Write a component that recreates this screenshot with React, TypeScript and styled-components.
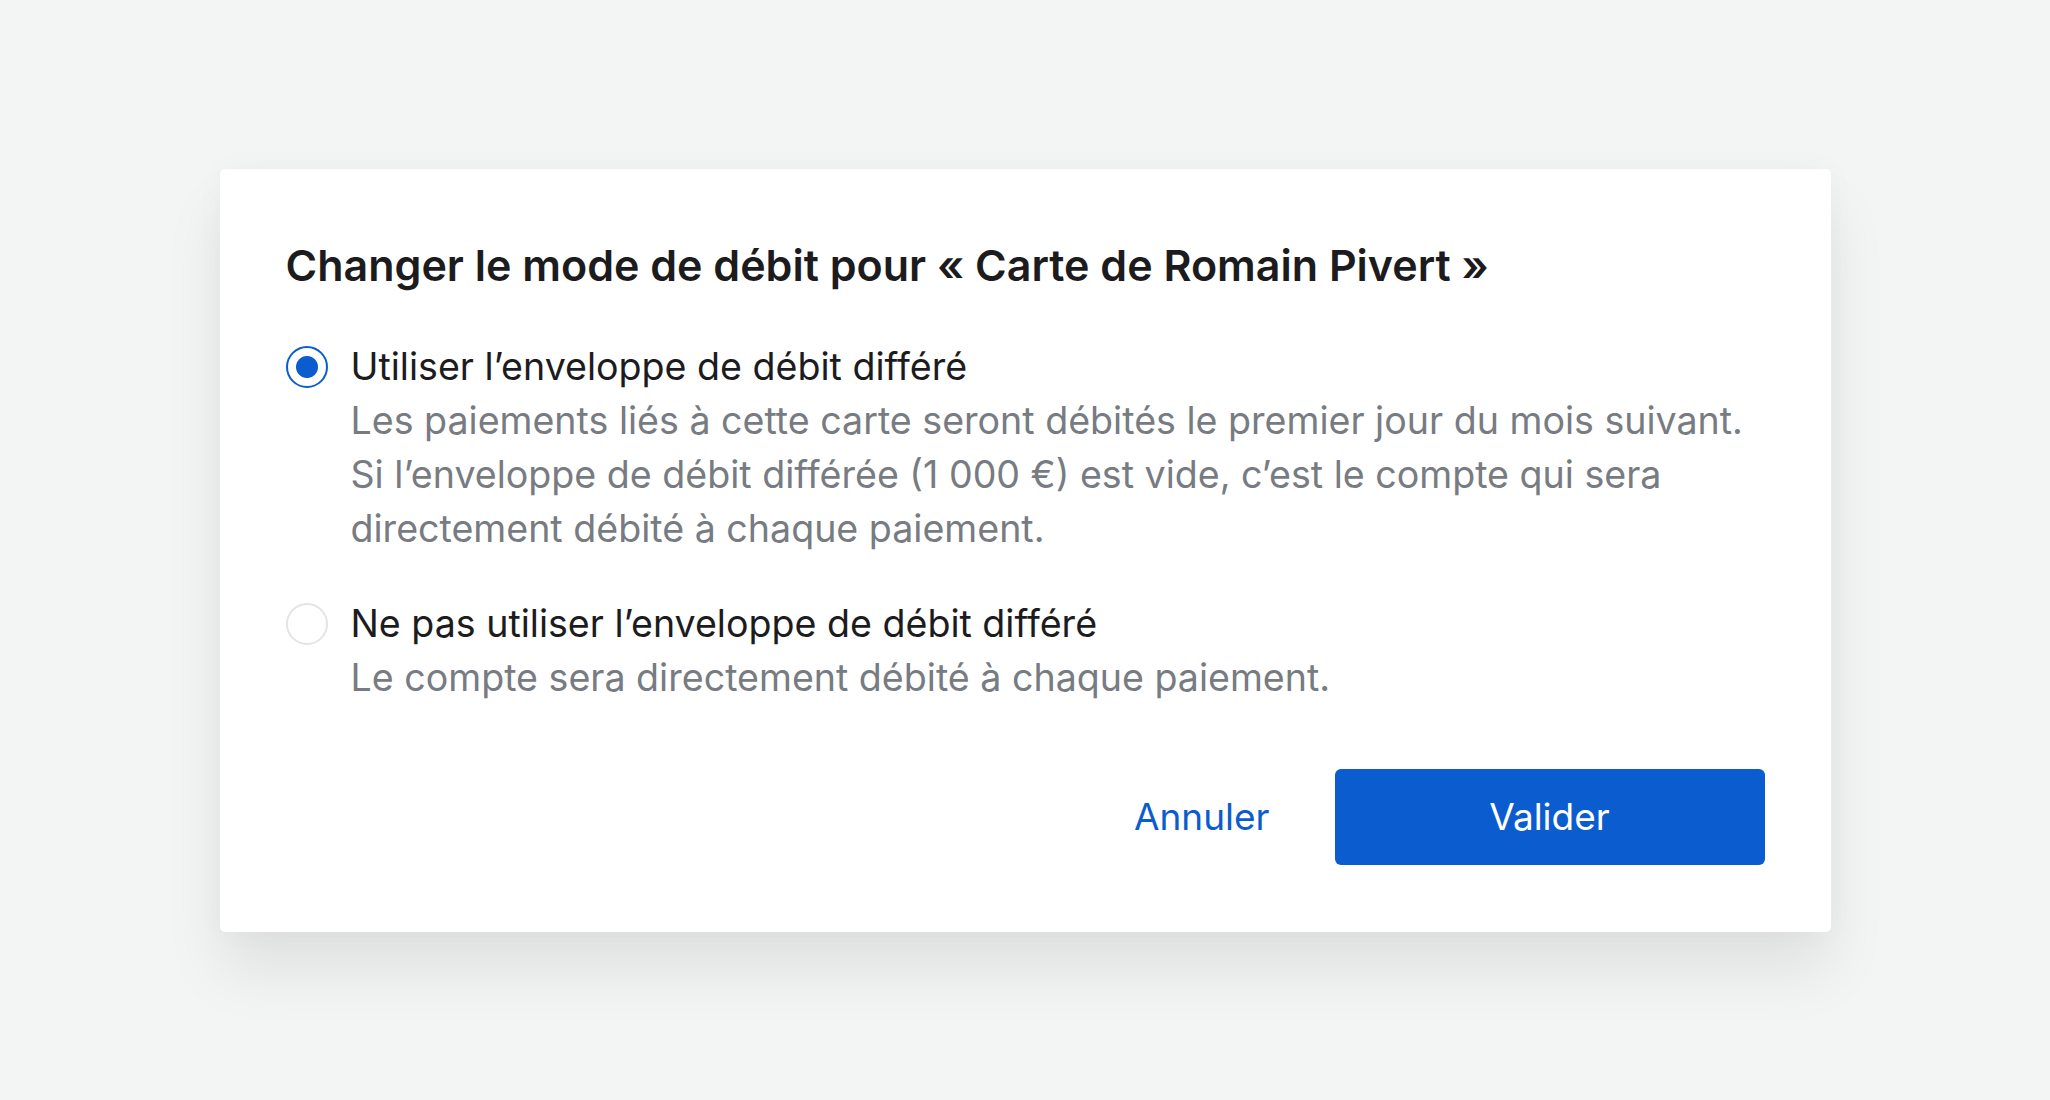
import { useState } from "react";
import styled, { createGlobalStyle } from "styled-components";

const colors = {
  page: "#f3f4f4",
  card: "#ffffff",
  text: "#1c1c1e",
  muted: "#777b82",
  primary: "#0b5ccf",
  radioOff: "#e3e4e5",
};

const GlobalStyle = createGlobalStyle`
  html, body {
    margin: 0;
    padding: 0;
    background: ${colors.page};
  }
  body {
    font-family: Inter, "Noto Sans", "Liberation Sans", sans-serif;
    -webkit-font-smoothing: antialiased;
  }
`;

const Page = styled.div`
  min-height: 100vh;
  display: flex;
  align-items: center;
  justify-content: center;
`;

const Dialog = styled.div`
  width: 1611px;
  box-sizing: border-box;
  padding: 68px 66px 67px 66px;
  background: ${colors.card};
  border-radius: 5px;
  box-shadow: 0 40px 60px rgba(0, 0, 0, 0.08), 0 0 30px rgba(0, 0, 0, 0.03);
  display: flex;
  flex-direction: column;
`;

const Title = styled.h1`
  margin: 0 0 47px 0;
  font-size: 43px;
  line-height: 56px;
  font-weight: 600;
  color: ${colors.text};
`;

const Options = styled.div`
  display: flex;
  flex-direction: column;
  gap: 41px;
`;

const Option = styled.label`
  display: flex;
  align-items: flex-start;
  gap: 23px;
  cursor: pointer;
`;

const RadioInput = styled.input`
  appearance: none;
  flex: none;
  margin: 6px 0 0 0;
  width: 42px;
  height: 42px;
  border-radius: 50%;
  box-sizing: border-box;
  border: 2.5px solid ${(p) => (p.checked ? colors.primary : colors.radioOff)};
  background: ${(p) =>
    p.checked
      ? `radial-gradient(circle, ${colors.primary} 0 10.5px, transparent 11.5px)`
      : "transparent"};
  cursor: pointer;
  outline: none;
`;

const OptionText = styled.div`
  display: flex;
  flex-direction: column;
  font-size: 37.6px;
  line-height: 54px;
`;

const Label = styled.span`
  color: ${colors.text};
`;

const Description = styled.span`
  color: ${colors.muted};
  max-width: 1420px;
`;

const Actions = styled.div`
  margin-top: 64px;
  display: flex;
  justify-content: flex-end;
  align-items: center;
  gap: 65px;
`;

const Button = styled.button<{ $variant?: "primary" | "ghost" }>`
  font-family: inherit;
  font-size: 37px;
  height: 96px;
  padding: 0;
  border-radius: 6px;
  border: none;
  cursor: pointer;
  width: ${(p) => (p.$variant === "primary" ? "430px" : "auto")};
  background: ${(p) => (p.$variant === "primary" ? colors.primary : "transparent")};
  color: ${(p) => (p.$variant === "primary" ? "#ffffff" : colors.primary)};
`;

const options = [
  {
    id: "deferred",
    label: "Utiliser l’enveloppe de débit différé",
    description: [
      "Les paiements liés à cette carte seront débités le premier jour du mois suivant.",
      "Si l’enveloppe de débit différée (1 000 €) est vide, c’est le compte qui sera directement débité à chaque paiement.",
    ],
  },
  {
    id: "direct",
    label: "Ne pas utiliser l’enveloppe de débit différé",
    description: ["Le compte sera directement débité à chaque paiement."],
  },
];

export default function App() {
  const [mode, setMode] = useState("deferred");

  return (
    <>
      <GlobalStyle />
      <Page>
        <Dialog role="dialog">
          <Title>Changer le mode de débit pour « Carte de Romain Pivert »</Title>
          <Options>
            {options.map((o) => (
              <Option key={o.id}>
                <RadioInput
                  type="radio"
                  name="mode"
                  checked={mode === o.id}
                  onChange={() => setMode(o.id)}
                />
                <OptionText>
                  <Label>{o.label}</Label>
                  {o.description.map((line) => (
                    <Description key={line}>{line}</Description>
                  ))}
                </OptionText>
              </Option>
            ))}
          </Options>
          <Actions>
            <Button $variant="ghost">Annuler</Button>
            <Button $variant="primary">Valider</Button>
          </Actions>
        </Dialog>
      </Page>
    </>
  );
}
